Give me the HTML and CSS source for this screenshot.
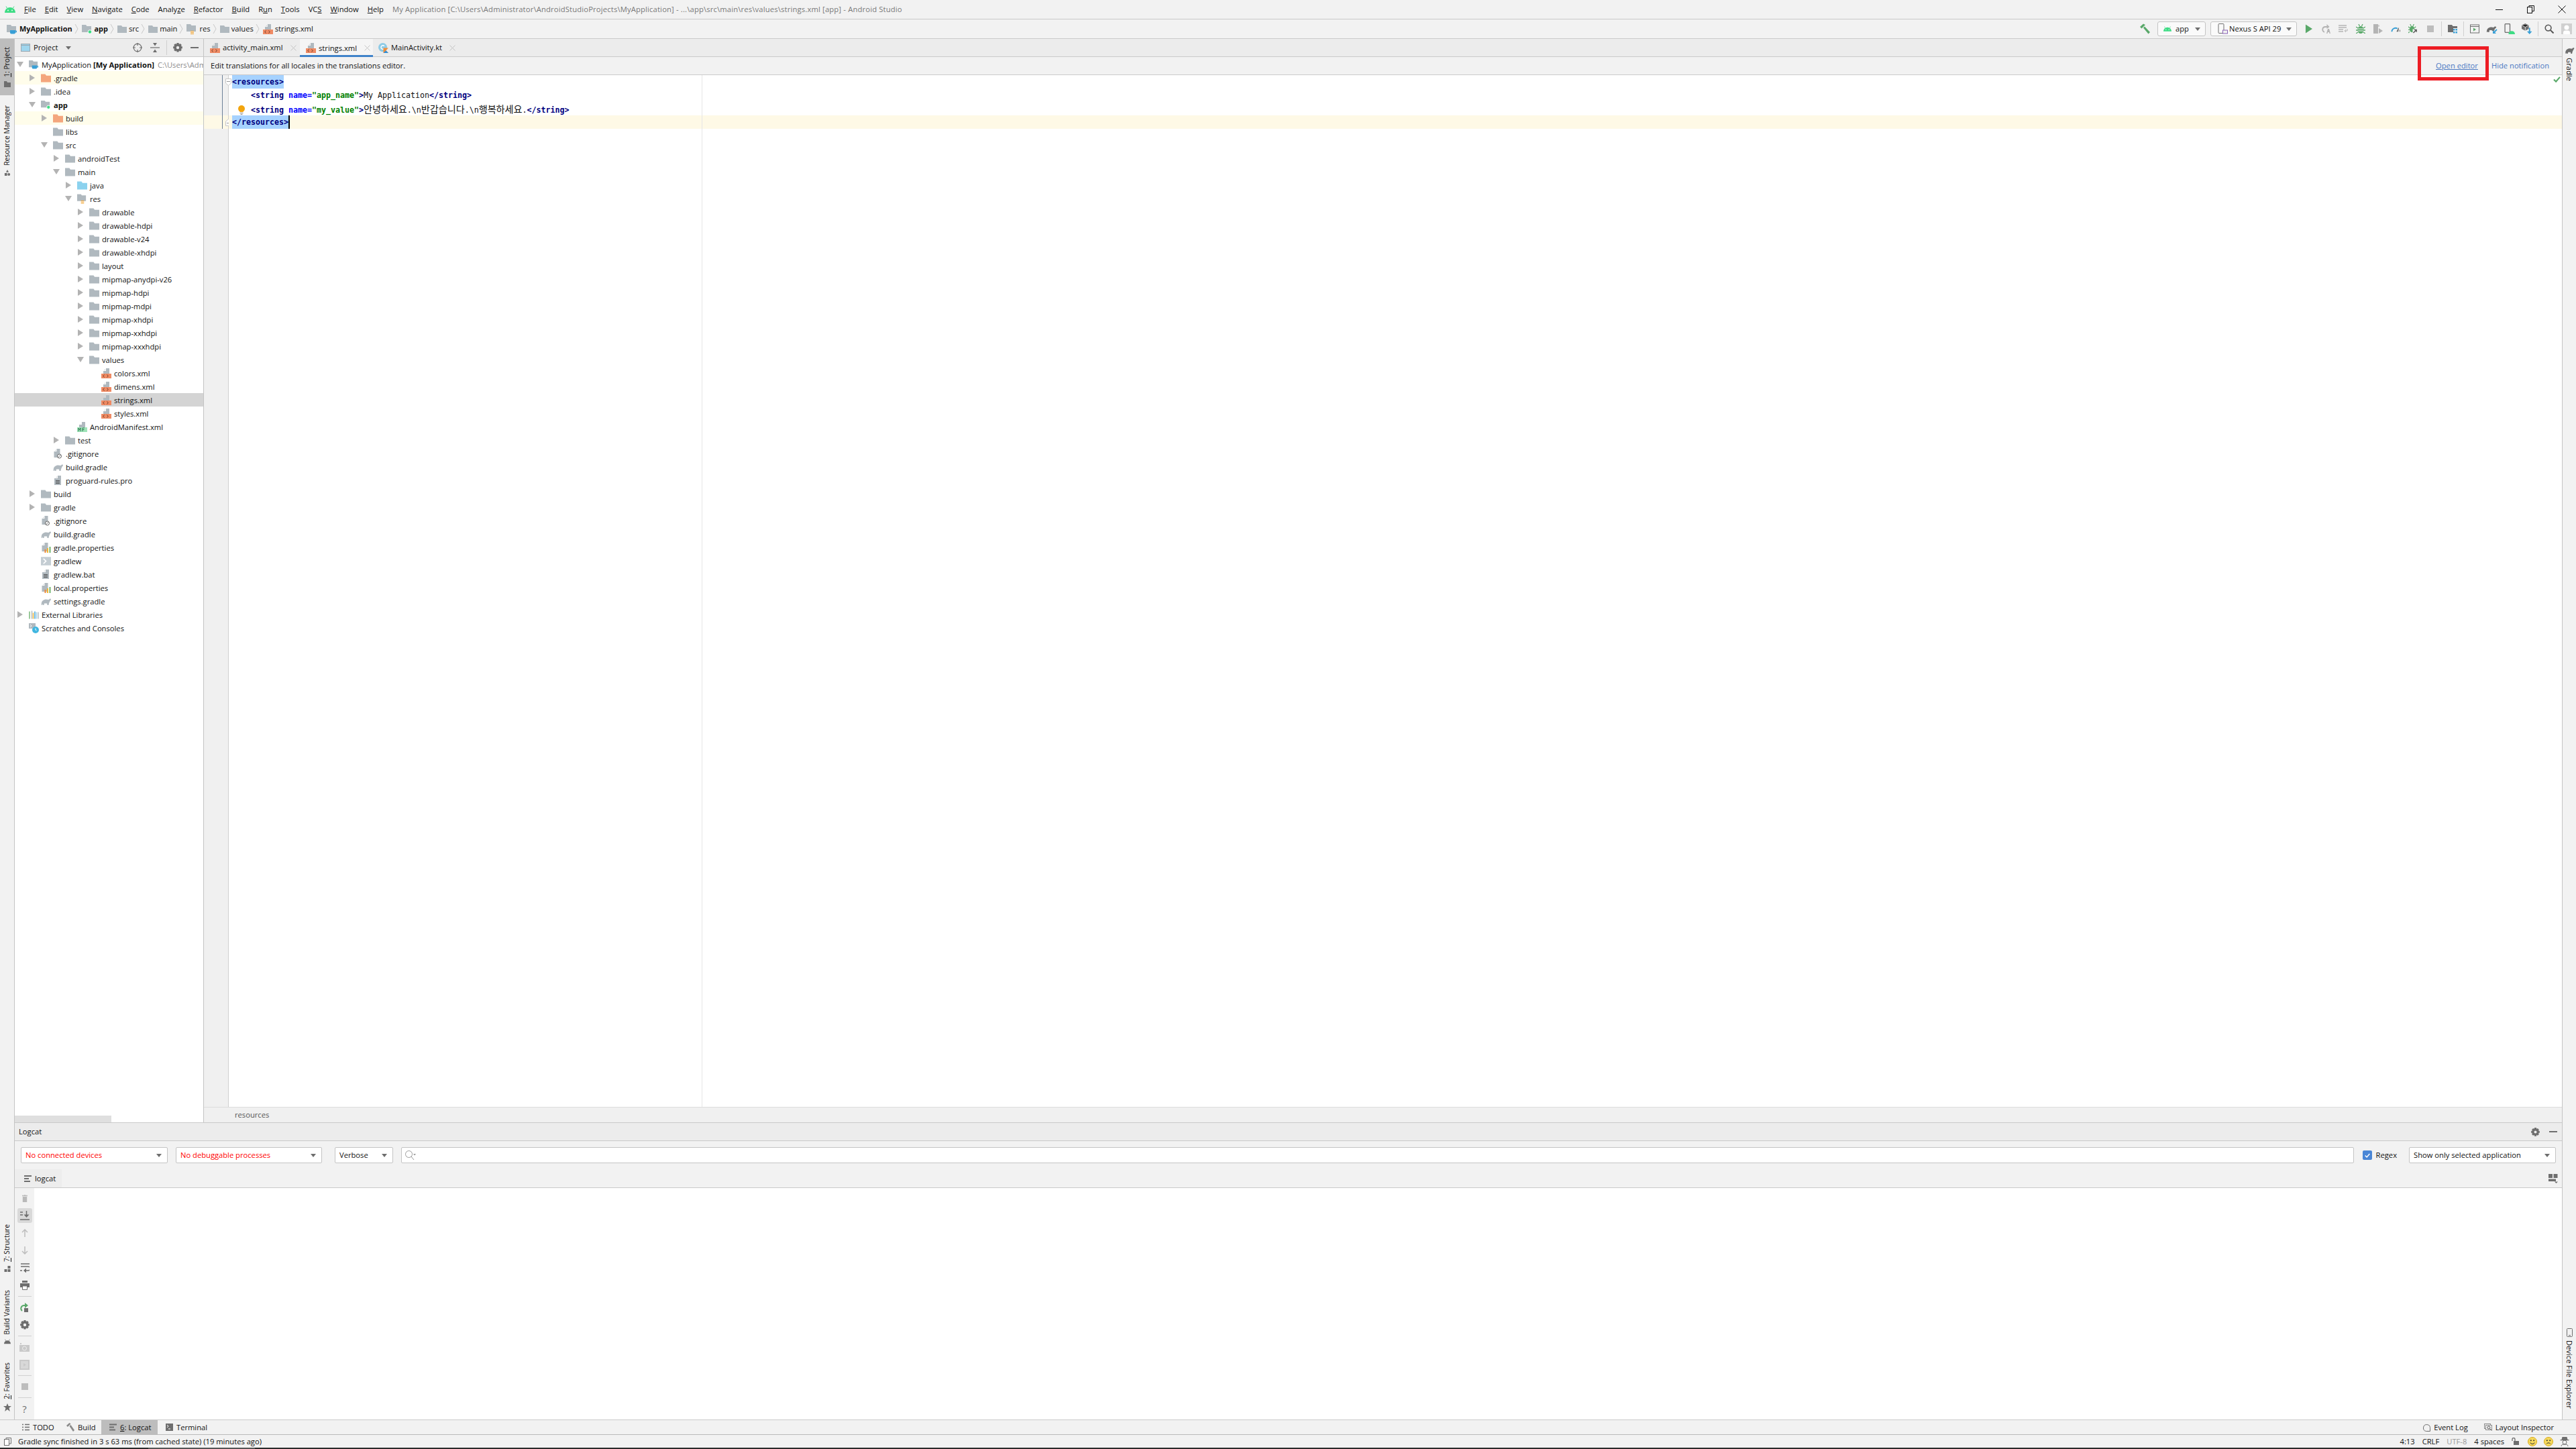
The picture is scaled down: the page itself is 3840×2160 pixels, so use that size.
FILE: index.html
```html
<!DOCTYPE html>
<html lang="en">
<head>
<meta charset="utf-8">
<title>MyApplication - strings.xml</title>
<link rel="stylesheet" href="styles.css">
</head>
<body>
<svg class="sprite" xmlns="http://www.w3.org/2000/svg">
  <symbol id="android" viewBox="0 0 16 10"><path fill="#3ddc84" d="M0 10a8 8 0 0 1 16 0z"/><path stroke="#3ddc84" stroke-width="1" d="M3.5 3 2 .5M12.500 3 14 .5"/><circle cx="5" cy="6.500" r=".9" fill="#fff"/><circle cx="11" cy="6.500" r=".9" fill="#fff"/></symbol>
  <symbol id="folder" viewBox="0 0 14 11"><path fill="#b0b9bf" d="M0 0h6l1.500 2H14v9H0z"/></symbol>
  <symbol id="folder-o" viewBox="0 0 14 11"><path fill="#f4a67d" d="M0 0h6l1.500 2H14v9H0z"/></symbol>
  <symbol id="folder-b" viewBox="0 0 14 11"><path fill="#8cd2ee" d="M0 0h6l1.500 2H14v9H0z"/></symbol>
  <symbol id="module" viewBox="0 0 16 14"><path fill="#b0b9bf" d="M0 0h6l1.500 2H14v9H0z"/><path fill="#389fd6" d="M5 8h8v3.500a2 2 0 0 1-2 2H7a2 2 0 0 1-2-2z"/><path fill="none" stroke="#389fd6" d="M13 9h1.500v2H13"/></symbol>
  <symbol id="moddot" viewBox="0 0 16 14"><path fill="#b0b9bf" d="M0 0h6l1.500 2H14v9H0z"/><circle cx="12" cy="10.500" r="2.800" fill="#3ddc84" stroke="#fff"/></symbol>
  <symbol id="resf" viewBox="0 0 16 15"><path fill="#b0b9bf" d="M0 0h6l1.500 2H14v9H0z"/><path stroke="#f2a22c" stroke-width="1" d="M6 10.500h5M6 12.500h5M6 14.500h5"/></symbol>
  <symbol id="xml" viewBox="0 0 15 15"><path fill="#b0b9bf" d="M7 0h5v8H3V4h4z"/><path fill="#d5d9dc" d="M6 1v2H4z"/><rect y="8" width="15" height="7" fill="#ef8a63"/><path fill="none" stroke="#5d3526" stroke-width=".9" d="M4.500 9.500 2.800 11.500l1.700 2M8.500 9.500l1.700 2-1.700 2"/></symbol>
  <symbol id="mf" viewBox="0 0 15 15"><path fill="#b0b9bf" d="M7 0h5v8H3V4h4z"/><rect y="8" width="15" height="7" fill="#9fe3b8"/><path fill="none" stroke="#27744a" stroke-width=".9" d="M2 14v-5l1.500 3 1.500-3v5M8 14V9h3M8 11.500h2.500"/></symbol>
  <symbol id="ignore" viewBox="0 0 14 15"><path fill="#b0b9bf" d="M5 0h5v13H1V4h4z"/><path fill="#d5d9dc" d="M4 1v2H2z"/><circle cx="9" cy="11" r="3" fill="#fff" stroke="#555" stroke-width=".9"/><path stroke="#555" stroke-width=".8" d="m7 13 4-4"/></symbol>
  <symbol id="gradle" viewBox="0 0 15 11"><path fill="#b0b9bf" d="M1 11c-1-3 .5-7 4-8 3-1 5 0 6.500 0 1-1.500 3-2 3.500-1 .3 1-1 2-2 4-1 1.500-1 3-1.500 5H9.500l-.5-2.500H5L4.500 11H3L2.500 9 2 11z"/></symbol>
  <symbol id="gradle-d" viewBox="0 0 15 11"><path fill="#6e6e6e" d="M1 11c-1-3 .5-7 4-8 3-1 5 0 6.500 0 1-1.500 3-2 3.500-1 .3 1-1 2-2 4-1 1.500-1 3-1.500 5H9.500l-.5-2.500H5L4.500 11H3L2.500 9 2 11z"/></symbol>
  <symbol id="textf" viewBox="0 0 11 15"><path fill="#b0b9bf" d="M5 0h5v14H0V4h5z"/><path fill="#d5d9dc" d="M4 1v2H2z"/><path stroke="#444" stroke-width=".9" d="M2 7.500h6M2 9.500h6M2 11.500h6"/></symbol>
  <symbol id="props" viewBox="0 0 14 15"><path fill="#b0b9bf" d="M5 0h5v13H1V4h4z"/><path fill="#d5d9dc" d="M4 1v2H2z"/><rect x="5" y="10" width="2" height="5" fill="#ef8a3c"/><rect x="8.500" y="8" width="2" height="7" fill="#f2b632"/><rect x="12" y="6" width="2" height="9" fill="#6fb36f"/></symbol>
  <symbol id="shell" viewBox="0 0 12 10"><rect width="12" height="10" fill="#c4cdd3"/><path fill="none" stroke="#fff" stroke-width="1.300" d="m3 2 3 3-3 3"/></symbol>
  <symbol id="libs" viewBox="0 0 15 12"><path stroke="#6fb36f" stroke-width="1.400" d="M1 1v11"/><path stroke="#b0b9bf" stroke-width="1.400" d="M4.500 0v12M14 2v10"/><path stroke="#389fd6" stroke-width="1.400" d="M9 1v11"/><path stroke="#f2b632" stroke-width="1.400" d="M6.500 3v9"/><path stroke="#9cd0e8" stroke-width="1.400" d="M11.500 2v10"/></symbol>
  <symbol id="scratch" viewBox="0 0 15 15"><rect width="10" height="8" fill="#b0b9bf"/><path fill="none" stroke="#fff" d="m2 2 2 2-2 2"/><circle cx="10" cy="10" r="5" fill="#40b6e0"/><path fill="none" stroke="#fff" d="M10 7.500V10l1.500 1"/></symbol>
  <symbol id="chev" viewBox="0 0 6 14"><path fill="none" stroke="#c9c9c9" d="m1 0 4 7-4 7"/></symbol>
  <symbol id="ar" viewBox="0 0 8 10"><path fill="#b3b3b3" d="M0 0l8 5-8 5z"/></symbol>
  <symbol id="ad" viewBox="0 0 10 8"><path fill="#b3b3b3" d="M0 0h10L5 8z"/></symbol>
  <symbol id="caret" viewBox="0 0 8 5"><path fill="#6e6e6e" d="M0 0h8L4 5z"/></symbol>
  <symbol id="hammer" viewBox="0 0 16 16"><path fill="#59a869" d="M1 5 6 .5l3 1.500L5 6l-1.500 1.500zM6 6.500l2-2 8 8.500-2.500 2.500z"/></symbol>
  <symbol id="phone" viewBox="0 0 16 16"><rect x="1" y=".5" width="8" height="14" rx="1" fill="none" stroke="#6e6e6e"/><rect x="7.500" y="10" width="7" height="5" fill="#f2f2f2" stroke="#8a63b5"/></symbol>
  <symbol id="run" viewBox="0 0 12 14"><path fill="#59a869" d="M1 0l11 7-11 7z"/></symbol>
  <symbol id="rerun" viewBox="0 0 14 14"><path fill="none" stroke="#b4b4b4" stroke-width="1.800" d="M9 4H6a4 4 0 0 0-1 7.800"/><path fill="#b4b4b4" d="M8.500 0l4 4-4 3zM10 7h2l2 7h-1.500l-.5-2h-2l-.5 2H8z"/></symbol>
  <symbol id="apply" viewBox="0 0 14 14"><path stroke="#b4b4b4" stroke-width="1.500" d="M0 2h12M0 5h12M0 8h7M0 11h7"/><path fill="none" stroke="#b4b4b4" d="M13 7v3h-3m1-2-2 2 2 2"/></symbol>
  <symbol id="bug" viewBox="0 0 14 14"><ellipse cx="7" cy="8.500" rx="4.500" ry="5.500" fill="#59a869"/><path stroke="#59a869" stroke-width="1.300" d="M0 4l3 2M14 4l-3 2M0 9h3M14 9h-3M0 14l3-2M14 14l-3-2M4 0l1.500 3M10 0 8.500 3"/><path stroke="#f2f2f2" d="M3 7h8M3 10h8"/></symbol>
  <symbol id="attach" viewBox="0 0 14 14"><path fill="#b4b4b4" d="M0 0h7v14H0zM8 6l6 4-6 4z"/><path fill="#d0d0d0" d="M7 1h2v3H7z"/></symbol>
  <symbol id="profile" viewBox="0 0 15 13"><path fill="none" stroke="#389fd6" stroke-width="2" d="M1.500 11a6 6 0 0 1 9-5"/><path fill="#6e6e6e" d="M9 11l3-6h1l-1 6zM14 8h1v3h-1z"/></symbol>
  <symbol id="bugrun" viewBox="0 0 15 15"><ellipse cx="6" cy="8" rx="4" ry="5" fill="#59a869"/><path stroke="#59a869" stroke-width="1.300" d="M0 4l2 2M12 4l-2 2M0 9h2M3 0l1.500 3M9 0 7.500 3M0 14l2-2"/><rect x="7" y="8" width="8" height="7" fill="#f2f2f2"/><path fill="none" stroke="#555" stroke-width="1.500" d="m8 14 5-5m-3.500 0H13v3.500"/></symbol>
  <symbol id="stopbox" viewBox="0 0 10 10"><rect width="10" height="10" fill="#bdbdbd"/></symbol>
  <symbol id="structure" viewBox="0 0 14 14"><path fill="#6e6e6e" d="M0 1h6l1.500 2H14v9H0z"/><rect x="8" y="6" width="6" height="8" fill="#f2f2f2"/><path fill="#389fd6" d="M8 7h2.500v2.500H8zM11.500 7H14v2.500h-2.500zM8 11h2.500v2.500H8zM11.500 11H14v2.500h-2.500z"/></symbol>
  <symbol id="avd" viewBox="0 0 14 13"><rect x=".5" y=".5" width="13" height="12" fill="none" stroke="#6e6e6e"/><path stroke="#6e6e6e" d="M0 3h14"/><path fill="#59a869" d="M5 5l4 2.500-4 2.500z"/></symbol>
  <symbol id="sync" viewBox="0 0 16 14"><path fill="#6e6e6e" d="M0 12c-.5-3 1-6 4-7 3-1 5 0 6 0 1-1.500 3-2 4-1 .5 1-1 2-2 3-.6 1-.7 2-1 3H8l-.5-1H4l-.5 3H2l-.4-1.500L1 12z"/><path stroke="#389fd6" stroke-width="1.800" d="M15 8 10 13"/><path fill="#389fd6" d="M9 9v5h5z"/></symbol>
  <symbol id="devmgr" viewBox="0 0 15 15"><rect x="1" y=".5" width="7" height="12" rx="1" fill="none" stroke="#6e6e6e" stroke-width="1.200"/><path fill="#3ddc84" d="M6 15a4.500 4.500 0 0 1 9 0z"/></symbol>
  <symbol id="sdk" viewBox="0 0 15 15"><path fill="#6e6e6e" d="M5 0l5 2.500v5L5 10 0 7.500v-5z"/><path stroke="#f2f2f2" stroke-width=".8" d="M0 2.500l5 2.500 5-2.500M5 5v5"/><path stroke="#389fd6" stroke-width="1.800" d="M11 6v7"/><path fill="#389fd6" d="M7.500 11h7L11 15z"/></symbol>
  <symbol id="search" viewBox="0 0 15 15"><circle cx="6" cy="6" r="4.700" fill="none" stroke="#555" stroke-width="1.700"/><path stroke="#555" stroke-width="2.200" d="m9.500 9.500 5 5"/></symbol>
  <symbol id="user" viewBox="0 0 16 16"><rect width="16" height="16" fill="#d0d0d0"/><circle cx="8" cy="6" r="3.500" fill="#fff"/><path fill="#fff" d="M3 16v-3q0-2 3-2.500h4q3 .5 3 2.500v3z"/></symbol>
  <symbol id="minimize" viewBox="0 0 13 13"><path stroke="#111" d="M1 6.500h11"/></symbol>
  <symbol id="restore" viewBox="0 0 11 12"><rect x=".5" y="2.500" width="7" height="9" fill="none" stroke="#111"/><path fill="none" stroke="#111" d="M3 2.500V.5h7.500v8h-3"/></symbol>
  <symbol id="close" viewBox="0 0 12 12"><path stroke="#111" d="m.5.500 11 11m0-11-11 11"/></symbol>
  <symbol id="x" viewBox="0 0 9 9"><path stroke="#c4c4c4" d="m.5.500 8 8m0-8-8 8"/></symbol>
  <symbol id="projbox" viewBox="0 0 14 12"><rect x=".5" y=".5" width="13" height="11" fill="#9fd6ee" stroke="#9aa7b0"/><path stroke="#9aa7b0" d="M0 2.500h14"/></symbol>
  <symbol id="target" viewBox="0 0 14 14"><circle cx="7" cy="7" r="5.800" fill="none" stroke="#6e6e6e" stroke-width="1.200"/><path stroke="#6e6e6e" stroke-width="1.200" d="M7 0v4M7 10v4M0 7h4M10 7h4"/></symbol>
  <symbol id="collapse" viewBox="0 0 14 14"><path stroke="#6e6e6e" stroke-width="1.200" d="M0 7h14"/><path fill="#6e6e6e" d="M7 4.500 4 0h6zM7 9.500 4 14h6z"/></symbol>
  <symbol id="gear" viewBox="0 0 14 14"><path fill="#6e6e6e" fill-rule="evenodd" d="M5.500 0h3l.4 2 1.800-1 2.100 2.100-1 1.800 2 .4v3l-2 .4 1 1.800-2.100 2.100-1.800-1-.4 2h-3l-.4-2-1.800 1-2.100-2.100 1-1.800-2-.4v-3l2-.4-1-1.800L3.300 1l1.800 1zM7 4.800a2.200 2.200 0 1 0 0 4.400 2.200 2.200 0 0 0 0-4.400z"/></symbol>
  <symbol id="minus" viewBox="0 0 12 2"><rect width="12" height="2" fill="#6e6e6e"/></symbol>
  <symbol id="kt" viewBox="0 0 16 16"><circle cx="7" cy="7" r="7" fill="#8ecbe6"/><path fill="none" stroke="#fff" stroke-width="1.500" d="M9.500 5a3 3 0 1 0 0 4"/><path fill="#f28c38" d="M8 8h8l-4 4 4 4H8z"/><path fill="#2f8fd8" d="M8 16l4-4 4 4z"/></symbol>
  <symbol id="check" viewBox="0 0 12 10"><path fill="none" stroke="#59a869" stroke-width="2.400" d="m1 5 3.500 3.500L11 1"/></symbol>
  <symbol id="bulb" viewBox="0 0 10 14"><circle cx="5" cy="5" r="5" fill="#f2a40e"/><path fill="#f2a40e" d="M2.500 7h5v3h-5z"/><path stroke="#8a8a8a" d="M2.500 11.500h5M3.500 13.500h3"/></symbol>
  <symbol id="fold" viewBox="0 0 9 11"><path fill="#fff" stroke="#c6c6c6" d="M.5.500h8v6.500l-4 3.500-4-3.500z"/><path stroke="#999" d="M2 4.500h5"/></symbol>
  <symbol id="foldend" viewBox="0 0 9 11"><path fill="#fff" stroke="#c6c6c6" d="M.5 10.500h8V4l-4-3.500-4 3.500z"/><path stroke="#999" d="M2 6.500h5"/></symbol>
  <symbol id="lines" viewBox="0 0 11 10"><path stroke="#6e6e6e" stroke-width="1.800" d="M0 1h11M0 5h7M0 9h9"/></symbol>
  <symbol id="loupe" viewBox="0 0 16 14"><circle cx="5.500" cy="5.500" r="5" fill="none" stroke="#9a9a9a"/><path stroke="#9a9a9a" d="m9 9 4 5"/><path fill="#9a9a9a" d="M12 5h4l-2 2.500z"/></symbol>
  <symbol id="layoutopt" viewBox="0 0 14 14"><path fill="#6e6e6e" d="M0 0h6v6H0zM7.500 0h6v6h-6zM0 7.500h11V11H0z"/><path fill="#6e6e6e" d="M9 11.500h5l-2.500 2.500z"/></symbol>
  <symbol id="trash" viewBox="0 0 10 14"><path fill="#b9b9b9" d="M4 0h2v1h4v2H0V1h4zM1 4h8v10H1z"/></symbol>
  <symbol id="scrollend" viewBox="0 0 14 14"><path stroke="#6e6e6e" stroke-width="1.500" d="M0 2h4M0 6h4M0 13h14"/><path stroke="#6e6e6e" stroke-width="1.500" d="M9.500 0v7"/><path fill="#6e6e6e" d="M5.500 5.500h8L9.500 10z"/></symbol>
  <symbol id="up" viewBox="0 0 10 12"><path fill="none" stroke="#bdbdbd" stroke-width="1.500" d="M5 12V1M1 5l4-4 4 4"/></symbol>
  <symbol id="down" viewBox="0 0 10 12"><path fill="none" stroke="#bdbdbd" stroke-width="1.500" d="M5 0v11M1 7l4 4 4-4"/></symbol>
  <symbol id="wrap" viewBox="0 0 14 14"><path stroke="#6e6e6e" stroke-width="1.500" d="M1 1h13M0 11h3" fill="none"/><path stroke="#6e6e6e" stroke-width="1.500" fill="none" d="M1 5h11a2 2 0 0 1 0 6H8"/><path fill="#6e6e6e" d="M9 7.500v7L5 11z"/></symbol>
  <symbol id="print" viewBox="0 0 14 14"><path fill="#6e6e6e" d="M3 0h8v3H3zM0 4h14v6H0z"/><path fill="#fff" stroke="#6e6e6e" d="M3.500 8h7v5.500h-7z"/></symbol>
  <symbol id="restart" viewBox="0 0 14 14"><path fill="none" stroke="#59a869" stroke-width="2" d="M8 4H6a4.500 4.500 0 0 0-3 8"/><path fill="#59a869" d="M7 0l5 4-5 4z"/><rect x="6" y="8" width="6" height="6" fill="#6e6e6e"/></symbol>
  <symbol id="camera" viewBox="0 0 15 13"><path fill="#c9c9c9" d="M0 3h15v10H0zM1 0h2v2H1z"/><circle cx="7.500" cy="8" r="3" fill="none" stroke="#eee"/></symbol>
  <symbol id="record" viewBox="0 0 15 15"><rect width="15" height="15" fill="#c9c9c9"/><rect x="2" y="2" width="11" height="11" fill="#d8d8d8"/><path fill="#c9c9c9" d="m6 5 4 2.500L6 10z"/></symbol>
  <symbol id="star" viewBox="0 0 12 12"><path fill="#6e6e6e" d="m6 0 1.700 4H12L8.500 6.800 9.800 12 6 9 2.200 12l1.300-5.200L0 4h4.300z"/></symbol>
  <symbol id="droid" viewBox="0 0 12 9"><path fill="#6e6e6e" d="M0 9a6 6 0 0 1 12 0zM1.500 0l2 3-1 .5zM10.500 0l-2 3 1 .5z"/></symbol>
  <symbol id="struct" viewBox="0 0 9 9"><path fill="#6e6e6e" d="M5 0h4v4H5zM0 5h4v4H0zM5 5h4v4H5z"/></symbol>
  <symbol id="foldergray" viewBox="0 0 10 9"><path fill="#6e6e6e" d="M0 0h4l1 2h5v7H0z"/></symbol>
  <symbol id="resmgr" viewBox="0 0 10 11"><path fill="#6e6e6e" d="M5 0l2.500 4.500h-5zM0 6h4.500v5H0z"/><circle cx="7.700" cy="8.500" r="2.400" fill="#6e6e6e"/></symbol>
  <symbol id="devphone" viewBox="0 0 9 13"><rect x=".5" y=".5" width="8" height="12" rx="1" fill="none" stroke="#6e6e6e"/><path stroke="#6e6e6e" d="M3 10.500h3"/></symbol>
  <symbol id="list" viewBox="0 0 11 11"><path stroke="#6e6e6e" stroke-width="1.400" d="M0 1.500h2M4 1.500h7M0 5.500h2M4 5.500h7M0 9.500h2M4 9.500h7"/></symbol>
  <symbol id="hammerg" viewBox="0 0 12 13"><path fill="#8a8a8a" d="M0 4 4.500 0l2 1.500L3 5 1.800 6zM4.500 5 6.500 3l5.500 8-2 2z"/></symbol>
  <symbol id="term" viewBox="0 0 11 11"><rect width="11" height="11" fill="#6e6e6e"/><path fill="none" stroke="#fff" d="m2 2 2 2-2 2M4 8h3"/></symbol>
  <symbol id="bubble" viewBox="0 0 12 12"><path fill="none" stroke="#6e6e6e" d="M11.500 11.500H5.500a5 5 0 1 1 6-5z"/></symbol>
  <symbol id="inspect" viewBox="0 0 12 12"><rect x=".5" y=".5" width="9" height="7" fill="none" stroke="#8a8a8a"/><rect x="2.500" y="2.500" width="9" height="7" fill="#f2f2f2" stroke="#8a8a8a"/><circle cx="7" cy="6" r="2" fill="#f2f2f2" stroke="#555"/><path stroke="#555" d="m8.500 7.500 3 3"/></symbol>
  <symbol id="page" viewBox="0 0 11 12"><rect x=".5" y="2.500" width="7" height="9" fill="#fff" stroke="#6e6e6e"/><path fill="none" stroke="#6e6e6e" d="M3 2V.5h7.500V9H8"/></symbol>
  <symbol id="lock" viewBox="0 0 11 11"><path fill="none" stroke="#6e6e6e" stroke-width="1.300" d="M1 5V2.500a2 2 0 0 1 4 0V5"/><rect x="3" y="5" width="8" height="6" fill="#6e6e6e"/></symbol>
  <symbol id="smile" viewBox="0 0 14 14"><circle cx="7" cy="7" r="6.500" fill="#f6d95c" stroke="#d6a91f"/><circle cx="4.800" cy="5.300" r="1" fill="#333"/><circle cx="9.200" cy="5.300" r="1" fill="#333"/><path fill="none" stroke="#333" d="M3.800 8.500a3.500 3.500 0 0 0 6.400 0"/></symbol>
  <symbol id="frown" viewBox="0 0 14 14"><circle cx="7" cy="7" r="6.500" fill="#f6d95c" stroke="#d6a91f"/><circle cx="4.800" cy="5.300" r="1" fill="#333"/><circle cx="9.200" cy="5.300" r="1" fill="#333"/><path fill="none" stroke="#333" d="M4 10.500a3.500 3.500 0 0 1 6 0"/></symbol>
  <symbol id="hector" viewBox="0 0 13 14"><path fill="#6e6e6e" d="M3 0h7l1 4H2zM0 4h13v1.200H0z"/><circle cx="6.500" cy="8" r="3" fill="none" stroke="#6e6e6e"/><path fill="none" stroke="#6e6e6e" d="M1.500 14c0-2.500 2-3 5-3s5 .5 5 3"/></symbol>
</svg>

<div class="app">
  <header class="titlebar">
    <svg class="ic-android"><use href="#android"/></svg>
    <nav class="menu">
      <span><u>F</u>ile</span><span><u>E</u>dit</span><span><u>V</u>iew</span><span><u>N</u>avigate</span><span><u>C</u>ode</span><span>Analy<u>z</u>e</span><span><u>R</u>efactor</span><span><u>B</u>uild</span><span>R<u>u</u>n</span><span><u>T</u>ools</span><span>VC<u>S</u></span><span><u>W</u>indow</span><span><u>H</u>elp</span>
      <span class="wintitle">My Application [C:\Users\Administrator\AndroidStudioProjects\MyApplication] - ...\app\src\main\res\values\strings.xml [app] - Android Studio</span>
    </nav>
    <div class="winbtns">
      <svg class="ic13"><use href="#minimize"/></svg>
      <svg class="ic-restore"><use href="#restore"/></svg>
      <svg class="ic-close"><use href="#close"/></svg>
    </div>
  </header>

  <div class="navbar">
    <div class="crumbs">
      <svg class="ic-mod"><use href="#module"/></svg><b class="c-label">MyApplication</b><svg class="ic-chev"><use href="#chev"/></svg>
      <svg class="ic-mod"><use href="#moddot"/></svg><b class="c-label">app</b><svg class="ic-chev"><use href="#chev"/></svg>
      <svg class="ic-fold"><use href="#folder"/></svg><span class="c-label">src</span><svg class="ic-chev"><use href="#chev"/></svg>
      <svg class="ic-fold"><use href="#folder"/></svg><span class="c-label">main</span><svg class="ic-chev"><use href="#chev"/></svg>
      <svg class="ic-res"><use href="#resf"/></svg><span class="c-label">res</span><svg class="ic-chev"><use href="#chev"/></svg>
      <svg class="ic-fold"><use href="#folder"/></svg><span class="c-label">values</span><svg class="ic-chev"><use href="#chev"/></svg>
      <svg class="ic-xml"><use href="#xml"/></svg><span class="c-label">strings.xml</span>
    </div>
    <div class="tools">
      <span class="tool"><svg class="ic16"><use href="#hammer"/></svg></span>
      <span class="combo combo-app"><svg class="ic-droid"><use href="#android"/></svg><span class="combo-text">app</span><svg class="ic-caret"><use href="#caret"/></svg></span>
      <span class="combo combo-dev"><svg class="ic16"><use href="#phone"/></svg><span class="combo-text">Nexus S API 29</span><svg class="ic-caret"><use href="#caret"/></svg></span>
      <span class="tool tool-run"><svg class="ic-run"><use href="#run"/></svg></span>
      <span class="tool"><svg class="ic14"><use href="#rerun"/></svg></span>
      <span class="tool"><svg class="ic14"><use href="#apply"/></svg></span>
      <span class="tool"><svg class="ic14"><use href="#bug"/></svg></span>
      <span class="tool"><svg class="ic14"><use href="#attach"/></svg></span>
      <span class="tool"><svg class="ic14"><use href="#profile"/></svg></span>
      <span class="tool"><svg class="ic14"><use href="#bugrun"/></svg></span>
      <span class="tool"><svg class="ic10"><use href="#stopbox"/></svg></span>
      <span class="tsep"></span>
      <span class="tool"><svg class="ic14"><use href="#structure"/></svg></span>
      <span class="tsep"></span>
      <span class="tool"><svg class="ic14"><use href="#avd"/></svg></span>
      <span class="tool"><svg class="ic16"><use href="#sync"/></svg></span>
      <span class="tool"><svg class="ic16"><use href="#devmgr"/></svg></span>
      <span class="tool"><svg class="ic16"><use href="#sdk"/></svg></span>
      <span class="tsep"></span>
      <span class="tool"><svg class="ic14"><use href="#search"/></svg></span>
      <span class="tool"><svg class="ic16"><use href="#user"/></svg></span>
    </div>
  </div>

  <div class="main">
    <aside class="strip-left">
      <div class="vgroup">
        <div class="vbtn vbtn-active"><span class="vl"><u>1</u>: Project</span><svg class="ic-v"><use href="#foldergray"/></svg></div>
        <div class="vbtn vbtn-res"><span class="vl">Resource Manager</span><svg class="ic-v"><use href="#resmgr"/></svg></div>
      </div>
      <div class="vgroup vgroup-bottom">
        <div class="vbtn"><span class="vl"><u>7</u>: Structure</span><svg class="ic-v"><use href="#struct"/></svg></div>
        <div class="vbtn"><span class="vl">Build Variants</span><svg class="ic-v"><use href="#droid"/></svg></div>
        <div class="vbtn"><span class="vl"><u>2</u>: Favorites</span><svg class="ic-v ic-star"><use href="#star"/></svg></div>
      </div>
    </aside>

    <div class="center">
      <div class="upper">
        <section class="project">
          <div class="panel-head">
            <svg class="ic-proj"><use href="#projbox"/></svg><span class="ph-title">Project</span><svg class="ic-caret"><use href="#caret"/></svg>
            <div class="ph-actions">
              <svg class="ic14"><use href="#target"/></svg>
              <svg class="ic14"><use href="#collapse"/></svg>
              <span class="ph-sep"></span>
              <svg class="ic14"><use href="#gear"/></svg>
              <svg class="ic-minus"><use href="#minus"/></svg>
            </div>
          </div>
          <div class="tree">
            <div class="row l0"><svg class="arr"><use href="#ad"/></svg><svg class="ti"><use href="#module"/></svg><span class="rootlabel">MyApplication <b>[My Application]</b> <span class="path">C:\Users\Administrator\AndroidStudioProjects\MyApplication</span></span></div>
            <div class="row l1 excl"><svg class="arr"><use href="#ar"/></svg><svg class="ti"><use href="#folder-o"/></svg><span>.gradle</span></div>
            <div class="row l1"><svg class="arr"><use href="#ar"/></svg><svg class="ti"><use href="#folder"/></svg><span>.idea</span></div>
            <div class="row l1"><svg class="arr"><use href="#ad"/></svg><svg class="ti"><use href="#moddot"/></svg><b>app</b></div>
            <div class="row l2 excl"><svg class="arr"><use href="#ar"/></svg><svg class="ti"><use href="#folder-o"/></svg><span>build</span></div>
            <div class="row l2"><span class="noarr"></span><svg class="ti"><use href="#folder"/></svg><span>libs</span></div>
            <div class="row l2"><svg class="arr"><use href="#ad"/></svg><svg class="ti"><use href="#folder"/></svg><span>src</span></div>
            <div class="row l3"><svg class="arr"><use href="#ar"/></svg><svg class="ti"><use href="#folder"/></svg><span>androidTest</span></div>
            <div class="row l3"><svg class="arr"><use href="#ad"/></svg><svg class="ti"><use href="#folder"/></svg><span>main</span></div>
            <div class="row l4"><svg class="arr"><use href="#ar"/></svg><svg class="ti"><use href="#folder-b"/></svg><span>java</span></div>
            <div class="row l4"><svg class="arr"><use href="#ad"/></svg><svg class="ti"><use href="#resf"/></svg><span>res</span></div>
            <div class="row l5"><svg class="arr"><use href="#ar"/></svg><svg class="ti"><use href="#folder"/></svg><span>drawable</span></div>
            <div class="row l5"><svg class="arr"><use href="#ar"/></svg><svg class="ti"><use href="#folder"/></svg><span>drawable-hdpi</span></div>
            <div class="row l5"><svg class="arr"><use href="#ar"/></svg><svg class="ti"><use href="#folder"/></svg><span>drawable-v24</span></div>
            <div class="row l5"><svg class="arr"><use href="#ar"/></svg><svg class="ti"><use href="#folder"/></svg><span>drawable-xhdpi</span></div>
            <div class="row l5"><svg class="arr"><use href="#ar"/></svg><svg class="ti"><use href="#folder"/></svg><span>layout</span></div>
            <div class="row l5"><svg class="arr"><use href="#ar"/></svg><svg class="ti"><use href="#folder"/></svg><span>mipmap-anydpi-v26</span></div>
            <div class="row l5"><svg class="arr"><use href="#ar"/></svg><svg class="ti"><use href="#folder"/></svg><span>mipmap-hdpi</span></div>
            <div class="row l5"><svg class="arr"><use href="#ar"/></svg><svg class="ti"><use href="#folder"/></svg><span>mipmap-mdpi</span></div>
            <div class="row l5"><svg class="arr"><use href="#ar"/></svg><svg class="ti"><use href="#folder"/></svg><span>mipmap-xhdpi</span></div>
            <div class="row l5"><svg class="arr"><use href="#ar"/></svg><svg class="ti"><use href="#folder"/></svg><span>mipmap-xxhdpi</span></div>
            <div class="row l5"><svg class="arr"><use href="#ar"/></svg><svg class="ti"><use href="#folder"/></svg><span>mipmap-xxxhdpi</span></div>
            <div class="row l5"><svg class="arr"><use href="#ad"/></svg><svg class="ti"><use href="#folder"/></svg><span>values</span></div>
            <div class="row l6"><span class="noarr"></span><svg class="ti"><use href="#xml"/></svg><span>colors.xml</span></div>
            <div class="row l6"><span class="noarr"></span><svg class="ti"><use href="#xml"/></svg><span>dimens.xml</span></div>
            <div class="row l6 selected"><span class="noarr"></span><svg class="ti"><use href="#xml"/></svg><span>strings.xml</span></div>
            <div class="row l6"><span class="noarr"></span><svg class="ti"><use href="#xml"/></svg><span>styles.xml</span></div>
            <div class="row l4"><span class="noarr"></span><svg class="ti"><use href="#mf"/></svg><span>AndroidManifest.xml</span></div>
            <div class="row l3"><svg class="arr"><use href="#ar"/></svg><svg class="ti"><use href="#folder"/></svg><span>test</span></div>
            <div class="row l2"><span class="noarr"></span><svg class="ti"><use href="#ignore"/></svg><span>.gitignore</span></div>
            <div class="row l2"><span class="noarr"></span><svg class="ti"><use href="#gradle"/></svg><span>build.gradle</span></div>
            <div class="row l2"><span class="noarr"></span><svg class="ti"><use href="#textf"/></svg><span>proguard-rules.pro</span></div>
            <div class="row l1"><svg class="arr"><use href="#ar"/></svg><svg class="ti"><use href="#folder"/></svg><span>build</span></div>
            <div class="row l1"><svg class="arr"><use href="#ar"/></svg><svg class="ti"><use href="#folder"/></svg><span>gradle</span></div>
            <div class="row l1"><span class="noarr"></span><svg class="ti"><use href="#ignore"/></svg><span>.gitignore</span></div>
            <div class="row l1"><span class="noarr"></span><svg class="ti"><use href="#gradle"/></svg><span>build.gradle</span></div>
            <div class="row l1"><span class="noarr"></span><svg class="ti"><use href="#props"/></svg><span>gradle.properties</span></div>
            <div class="row l1"><span class="noarr"></span><svg class="ti"><use href="#shell"/></svg><span>gradlew</span></div>
            <div class="row l1"><span class="noarr"></span><svg class="ti"><use href="#textf"/></svg><span>gradlew.bat</span></div>
            <div class="row l1"><span class="noarr"></span><svg class="ti"><use href="#props"/></svg><span>local.properties</span></div>
            <div class="row l1"><span class="noarr"></span><svg class="ti"><use href="#gradle"/></svg><span>settings.gradle</span></div>
            <div class="row l0"><svg class="arr"><use href="#ar"/></svg><svg class="ti"><use href="#libs"/></svg><span>External Libraries</span></div>
            <div class="row l0"><span class="noarr"></span><svg class="ti"><use href="#scratch"/></svg><span>Scratches and Consoles</span></div>
          </div>
          <div class="hscroll"><div class="hthumb"></div></div>
        </section>

        <section class="editor-col">
          <div class="tabs">
            <div class="tab tab-first"><svg class="ic-xml"><use href="#xml"/></svg><span>activity_main.xml</span><svg class="ic-x"><use href="#x"/></svg></div>
            <div class="tab tab-active"><svg class="ic-xml"><use href="#xml"/></svg><span>strings.xml</span><svg class="ic-x"><use href="#x"/></svg></div>
            <div class="tab"><svg class="ic-xml"><use href="#kt"/></svg><span>MainActivity.kt</span><svg class="ic-x"><use href="#x"/></svg></div>
          </div>
          <div class="notify">
            <span>Edit translations for all locales in the translations editor.</span>
            <div class="notify-links"><a class="link link-open">Open editor</a><a class="link">Hide notification</a></div>
          </div>
          <div class="editor">
            <div class="eline"><div class="gut"><svg class="foldmark"><use href="#fold"/></svg></div><div class="code"><span class="txt"><span class="sel"><span class="tag">&lt;resources&gt;</span></span></span><svg class="ic-check"><use href="#check"/></svg></div></div>
            <div class="eline"><div class="gut"></div><div class="code"><span class="txt">    <span class="tag">&lt;string </span><span class="attr">name=</span><span class="val">"app_name"</span><span class="tag">&gt;</span>My Application<span class="tag">&lt;/string&gt;</span></span></div></div>
            <div class="eline"><div class="gut"></div><div class="code"><svg class="ic-bulb"><use href="#bulb"/></svg><span class="txt">    <span class="tag">&lt;string </span><span class="attr">name=</span><span class="val">"my_value"</span><span class="tag">&gt;</span><span class="ko">안녕하세요</span>.\n<span class="ko">반갑습니다</span>.\n<span class="ko">행복하세요</span>.<span class="tag">&lt;/string&gt;</span></span></div></div>
            <div class="eline cur"><div class="gut"><svg class="foldmark"><use href="#foldend"/></svg></div><div class="code"><span class="txt"><span class="sel"><span class="tag">&lt;/resources&gt;</span></span></span><span class="cursor"></span></div></div>
            <div class="eline efill"><div class="gut gut-plain"></div><div class="code"></div></div>
          </div>
          <div class="ecrumb">resources</div>
        </section>
      </div>

      <section class="logcat">
        <div class="panel-head lc-head"><span>Logcat</span>
          <div class="lc-actions"><svg class="ic13"><use href="#gear"/></svg><svg class="ic-minus"><use href="#minus"/></svg></div>
        </div>
        <div class="filters">
          <div class="field f-dev"><span class="err">No connected devices</span><svg class="ic-caret"><use href="#caret"/></svg></div>
          <div class="field f-proc"><span class="err">No debuggable processes</span><svg class="ic-caret"><use href="#caret"/></svg></div>
          <div class="field f-level"><span>Verbose</span><svg class="ic-caret"><use href="#caret"/></svg></div>
          <div class="field f-search"><svg class="ic-loupe"><use href="#loupe"/></svg></div>
          <label class="regex"><span class="cb"><svg class="ic-cb" viewBox="0 0 12 10"><path fill="none" stroke="#fff" stroke-width="1.800" d="m2 5 3 3 5-6"/></svg></span><span>Regex</span></label>
          <div class="field f-show"><span>Show only selected application</span><svg class="ic-caret"><use href="#caret"/></svg></div>
        </div>
        <div class="lc-tabs">
          <div class="lc-tab"><svg class="ic-lines"><use href="#lines"/></svg><span>logcat</span></div>
          <svg class="ic-layout"><use href="#layoutopt"/></svg>
        </div>
        <div class="lc-body">
          <div class="lc-tools">
            <span class="lt"><svg class="ic-tr"><use href="#trash"/></svg></span>
            <span class="lt lt-on"><svg class="ic14"><use href="#scrollend"/></svg></span>
            <span class="lt"><svg class="ic-ud"><use href="#up"/></svg></span>
            <span class="lt"><svg class="ic-ud"><use href="#down"/></svg></span>
            <span class="lt"><svg class="ic14"><use href="#wrap"/></svg></span>
            <span class="lt"><svg class="ic14"><use href="#print"/></svg></span>
            <span class="lsep"></span>
            <span class="lt"><svg class="ic14"><use href="#restart"/></svg></span>
            <span class="lt"><svg class="ic14"><use href="#gear"/></svg></span>
            <span class="lsep"></span>
            <span class="lt"><svg class="ic15"><use href="#camera"/></svg></span>
            <span class="lt"><svg class="ic15"><use href="#record"/></svg></span>
            <span class="lsep"></span>
            <span class="lt"><svg class="ic10"><use href="#stopbox"/></svg></span>
            <span class="lsep"></span>
            <span class="lt lt-help">?</span>
          </div>
          <div class="lc-output"></div>
        </div>
      </section>
    </div>

    <aside class="strip-right">
      <div class="rbtn"><svg class="ic-gr"><use href="#gradle-d"/></svg><span class="vr">Gradle</span></div>
      <div class="rbtn rbtn-bottom"><svg class="ic-phone"><use href="#devphone"/></svg><span class="vr">Device File Explorer</span></div>
    </aside>
  </div>

  <div class="bottombar">
    <div class="bt bt-todo"><svg class="ic11"><use href="#list"/></svg><span>TODO</span></div>
    <div class="bt bt-build"><svg class="ic-ham"><use href="#hammerg"/></svg><span>Build</span></div>
    <div class="bt bt-active"><svg class="ic11"><use href="#lines"/></svg><span><u>6</u>: Logcat</span></div>
    <div class="bt bt-term"><svg class="ic11"><use href="#term"/></svg><span>Terminal</span></div>
    <div class="bt-right">
      <div class="bt2"><svg class="ic12"><use href="#bubble"/></svg><span>Event Log</span></div>
      <div class="bt2"><svg class="ic12"><use href="#inspect"/></svg><span>Layout Inspector</span></div>
    </div>
  </div>

  <footer class="status">
    <svg class="ic-page"><use href="#page"/></svg>
    <span class="st-msg">Gradle sync finished in 3 s 63 ms (from cached state) (19 minutes ago)</span>
    <div class="st-right">
      <span>4:13</span><span>CRLF</span><span class="dim">UTF-8</span><span>4 spaces</span>
      <svg class="ic11"><use href="#lock"/></svg>
      <svg class="ic14 ic-smile"><use href="#smile"/></svg>
      <svg class="ic14 ic-frown"><use href="#frown"/></svg>
      <svg class="ic14 ic-frown"><use href="#hector"/></svg>
    </div>
  </footer>
  <div class="osbar"><div class="osbar-mark"></div></div>

  <div class="annotation"></div>
</div>
</body>
</html>
```

FILE: styles.css
```css
* { box-sizing: border-box; }
html, body { margin: 0; padding: 0; }
body { width: 3840px; height: 2160px; overflow: hidden; background: #f2f2f2; color: #111; font: 11.2px/20px "Open Sans", "Noto Sans", sans-serif; }
svg { display: block; flex: none; }
.sprite { display: none; }
u { text-decoration: underline; }
.app { position: relative; display: flex; flex-direction: column; width: 3840px; height: 2160px; }

/* icon sizes */
.ic10 { width: 10px; height: 10px; }
.ic11 { width: 11px; height: 11px; }
.ic12 { width: 12px; height: 12px; }
.ic13 { width: 13px; height: 13px; }
.ic14 { width: 14px; height: 14px; }
.ic15 { width: 15px; height: 15px; }
.ic16 { width: 16px; height: 16px; }
.ic-android { width: 16px; height: 10px; margin-left: 7px; }
.ic-restore { width: 11px; height: 12px; }
.ic-close { width: 12px; height: 12px; }
.ic-mod { width: 16px; height: 14px; margin-top: 1px; }
.ic-fold { width: 14px; height: 11px; }
.ic-res { width: 16px; height: 15px; }
.ic-xml { width: 15px; height: 15px; }
.ic-chev { width: 6px; height: 14px; margin: 0 5px 0 3px; }
.ic-caret { width: 8px; height: 5px; }
.ic-droid { width: 12px; height: 8px; }
.ic-run { width: 11px; height: 14px; }
.ic-proj { width: 14px; height: 12px; }
.ic-minus { width: 12px; height: 2px; }
.ic-x { width: 9px; height: 9px; margin-left: 7px; }
.ic-tr { width: 8px; height: 13px; }
.ic-ud { width: 10px; height: 12px; }
.ic-lines { width: 11px; height: 10px; }
.ic-layout { width: 14px; height: 14px; margin-left: auto; margin-right: 6px; }
.ic-loupe { width: 16px; height: 14px; }
.ic-cb { width: 10px; height: 9px; }
.ic-v { width: 10px; height: 9px; }
.ic-star { width: 12px; height: 12px; }
.ic-gr { width: 15px; height: 10px; }
.ic-phone { width: 9px; height: 13px; }
.ic-ham { width: 12px; height: 13px; }
.ic-page { width: 11px; height: 12px; }
.ic-check { width: 11px; height: 9px; margin-left: auto; margin-right: 2px; margin-top: 2px; }

/* title bar */
.titlebar { display: flex; align-items: center; flex: none; height: 29px; border-bottom: 1px solid #cacaca; }
.menu { display: flex; gap: 13px; margin-left: 13px; white-space: nowrap; }
.wintitle { color: #787878; letter-spacing: .18px; }
.winbtns { display: flex; align-items: center; gap: 35px; margin-left: auto; margin-right: 15px; }

/* nav bar */
.navbar { display: flex; align-items: center; flex: none; height: 29px; border-bottom: 1px solid #cacaca; padding-left: 10px; }
.crumbs { display: flex; align-items: center; white-space: nowrap; }
.c-label { margin-left: 3px; }
b.c-label { font-size: 10.9px; }
.tools { display: flex; align-items: center; margin-left: auto; margin-right: 1px; }
.tool { display: flex; align-items: center; justify-content: center; width: 26px; height: 22px; }
.tool-run { margin-left: 4px; }
.tsep { display: block; width: 7px; height: 22px; background: linear-gradient(#cfcfcf, #cfcfcf) 3px 0 / 1px 100% no-repeat; }
.combo { display: flex; align-items: center; height: 22px; border: 1px solid #c4c4c4; border-radius: 3px; background: #fafafa; padding: 0 7px 0 8px; margin-left: 6px; }
.combo-text { margin-left: 6px; }
.combo .ic-caret { margin-left: auto; }
.combo-app { width: 72px; }
.combo-dev { width: 129px; margin-left: 7px; padding-left: 10px; }
.combo-dev .combo-text { margin-left: 1px; }

/* main */
.main { display: flex; flex: 1; min-height: 0; }
.strip-left { display: flex; flex-direction: column; flex: none; width: 22px; border-right: 1px solid #c4c4c4; }
.vgroup { display: flex; flex-direction: column; }
.vgroup-bottom { margin-top: auto; padding-bottom: 12px; gap: 27px; }
.vbtn { display: flex; flex-direction: column; align-items: center; gap: 6px; }
.vbtn-active { height: 84px; padding-top: 12px; background: #bdbdbd; }
.vbtn-res { margin-top: 15px; }
.vl { writing-mode: vertical-rl; transform: rotate(180deg); font-size: 10.3px; line-height: 21px; width: 21px; white-space: nowrap; }

.center { display: flex; flex-direction: column; flex: 1; min-width: 0; }
.upper { display: flex; flex: none; height: 1615px; }

/* project panel */
.project { display: flex; flex-direction: column; flex: none; width: 282px; border-right: 1px solid #c4c4c4; background: #fff; }
.panel-head { display: flex; align-items: center; flex: none; height: 27px; background: #ececec; border-bottom: 1px solid #cacaca; padding-left: 9px; }
.ph-title { margin: 0 11px 0 5px; }
.ph-actions { display: flex; align-items: center; margin-left: auto; padding-right: 7px; gap: 12px; }
.ph-sep { width: 1px; height: 22px; background: #cfcfcf; margin: 0 -3px 0 -2px; }
.tree { flex: 1; min-height: 0; overflow: hidden; padding-top: 1px; }
.row { display: flex; align-items: center; height: 20px; white-space: nowrap; overflow: hidden; }
.row > span, .row > b { flex: none; padding-top: 2px; }
.row > .noarr { padding-top: 0; }
.l0 { padding-left: 3px; }
.l1 { padding-left: 21px; }
.l2 { padding-left: 39px; }
.l3 { padding-left: 57px; }
.l4 { padding-left: 75px; }
.l5 { padding-left: 93px; }
.l6 { padding-left: 111px; }
.arr { width: 10px; height: 10px; margin-right: 8px; }
.noarr { width: 18px; }
.ti { width: 15px; height: 15px; margin-right: 4px; }
.excl { background: #fffdeb; }
.selected { background: #d4d4d4; }
.path { color: #8c8c8c; margin-left: 2px; }
.hscroll { flex: none; height: 10px; }
.hthumb { width: 144px; height: 10px; background: #dfdfdf; }

/* editor */
.editor-col { display: flex; flex-direction: column; flex: 1; min-width: 0; }
.tabs { display: flex; flex: none; height: 27px; background: #ececec; border-bottom: 1px solid #cacaca; }
.tab { display: flex; align-items: center; height: 26px; padding: 0 8px; gap: 4px; white-space: nowrap; }
.tab-first { width: 143px; padding-left: 9px; }
.tab-active { width: 109px; padding-left: 9px; background: #f5f5f5; box-shadow: inset 0 -3px 0 #4083c9; height: 27px; }
.notify { display: flex; align-items: center; flex: none; height: 27px; padding-left: 10px; border-bottom: 1px solid #cacaca; }
.notify-links { display: flex; gap: 20px; margin-left: auto; margin-right: 19px; }
.link { color: #4a78c2; }
.link-open { text-decoration: underline; }
.editor { display: flex; flex-direction: column; flex: 1; min-height: 0; background: #fff; font: 11.63px/20px "DejaVu Sans Mono", "Liberation Mono", monospace; }
.eline { display: flex; flex: none; height: 20px; }
.efill { flex: 1; height: auto; }
.gut { position: relative; flex: none; width: 37px; background: #f0f0f0 linear-gradient(#6d8098, #6d8098) 27px 0 / 1px 100% no-repeat; border-right: 1px solid #d0d0d0; }
.gut-plain { background: #f0f0f0; }
.code { position: relative; display: flex; flex: 1; padding-left: 5px; background: linear-gradient(#e6e6e6, #e6e6e6) 705px 0 / 1px 100% no-repeat; }
.txt { display: block; height: 20px; white-space: pre; }
.tag { color: #000080; font-weight: 700; }
.attr { color: #0000ff; font-weight: 700; }
.val { color: #008000; font-weight: 700; }
.ko { font: 14.1px/20px "Noto Sans CJK KR", sans-serif; }
.sel { display: inline-block; height: 20px; background: #a6d2ff; }
.cursor { width: 2px; height: 20px; background: #000; }
.cur .gut { background-color: #fef9e6; }
.cur .code { background-color: #fef9e6; }
.foldmark { position: absolute; left: 32px; top: 5px; width: 9px; height: 11px; }
.ic-bulb { position: absolute; left: 14px; top: 5px; width: 10px; height: 14px; }
.ecrumb { flex: none; height: 23px; padding-left: 46px; border-top: 1px solid #dcdcdc; color: #555; line-height: 21px; background: #f0f0f0; }

/* logcat */
.logcat { display: flex; flex-direction: column; flex: 1; min-height: 0; border-top: 1px solid #cacaca; }
.lc-head { padding-left: 6px; }
.lc-actions { display: flex; align-items: center; gap: 14px; margin-left: auto; margin-right: 7px; }
.filters { display: flex; flex: none; align-items: center; height: 42px; padding: 0 9px; }
.field { display: flex; align-items: center; height: 24px; padding: 0 6px; border: 1px solid #c4c4c4; border-radius: 2px; background: #fff; }
.field .ic-caret { margin-left: auto; margin-right: 2px; }
.err { color: #f00; }
.f-dev { width: 219px; }
.f-proc { width: 218px; margin-left: 12px; }
.f-level { width: 87px; margin-left: 19px; }
.f-search { flex: 1; margin-left: 12px; padding-left: 5px; }
.regex { display: flex; align-items: center; margin-left: 13px; gap: 6px; }
.cb { display: flex; align-items: center; justify-content: center; width: 14px; height: 14px; background: #4a86d6; border-radius: 2px; }
.f-show { width: 219px; margin-left: 18px; }
.lc-tabs { display: flex; flex: none; align-items: center; height: 28px; border-bottom: 1px solid #cacaca; }
.lc-tab { display: flex; align-items: center; gap: 5px; width: 70px; height: 27px; padding-left: 14px; background: #ededed; }
.lc-body { display: flex; flex: 1; min-height: 0; background: #fff; }
.lc-tools { display: flex; flex-direction: column; align-items: center; flex: none; width: 29px; padding-top: 2px; background: #f2f2f2; }
.lt { display: flex; align-items: center; justify-content: center; width: 22px; height: 26px; flex: none; }
.lt-on { height: 22px; margin: 2px 0; background: #d9d9d9; border-radius: 3px; }
.lsep { display: block; flex: none; width: 20px; height: 7px; background: linear-gradient(#d0d0d0, #d0d0d0) 0 3px / 100% 1px no-repeat; }
.lt-help { font-size: 15px; color: #6e6e6e; }
.lc-output { flex: 1; }

.strip-right { display: flex; flex-direction: column; align-items: center; flex: none; width: 21px; border-left: 1px solid #c4c4c4; padding-top: 12px; }
.rbtn { display: flex; flex-direction: column; align-items: center; gap: 6px; }
.rbtn-bottom { margin-top: auto; padding-bottom: 16px; gap: 5px; }
.vr { writing-mode: vertical-rl; line-height: 20px; white-space: nowrap; }

/* bottom */
.bottombar { display: flex; flex: none; align-items: center; height: 23px; padding-left: 23px; border-top: 1px solid #cacaca; border-bottom: 1px solid #b9b9b9; }
.bt { display: flex; align-items: center; gap: 5px; height: 21px; padding: 0 10px; white-space: nowrap; }
.bt-todo { width: 66px; }
.bt-build { width: 62px; }
.bt-active { width: 84px; padding-left: 12px; background: #bdbdbd; }
.bt-term { padding-left: 12px; }
.bt-right { display: flex; align-items: center; gap: 24px; margin-left: auto; padding-right: 33px; }
.bt2 { display: flex; align-items: center; gap: 5px; }
.status { display: flex; flex: none; align-items: center; height: 19px; padding-left: 6px; }
.st-msg { margin-left: 10px; }
.st-right { display: flex; align-items: center; gap: 11px; margin-left: auto; padding-right: 10px; }
.dim { color: #999; }
.ic-smile { margin-left: 2px; }
.ic-frown { margin-left: -1px; }
.osbar { flex: none; height: 2px; background: #2b2b2b; }
.osbar-mark { width: 159px; height: 2px; margin-left: 221px; background: #555; }

/* red highlight drawn over the screenshot */
.annotation { position: absolute; left: 3604px; top: 69px; width: 106px; height: 51px; border: 5px solid #ed1c24; }
```
